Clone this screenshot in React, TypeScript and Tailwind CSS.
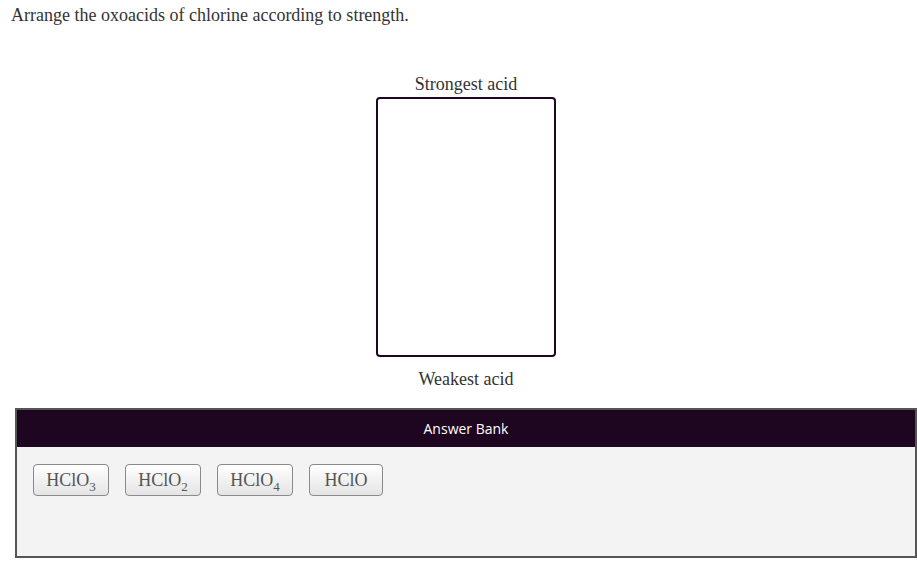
const serif = "font-['Liberation_Serif',_'Times_New_Roman',_serif]";

const answers: Array<{ base: string; sub?: string }> = [
  { base: "HClO", sub: "3" },
  { base: "HClO", sub: "2" },
  { base: "HClO", sub: "4" },
  { base: "HClO" }
];

function AnswerChip({ base, sub }: { base: string; sub?: string }) {
  return (
    <div
      className={`flex h-[32px] items-center justify-center rounded-[4px] border border-[#8a8a8a] bg-gradient-to-b from-white to-[#e4e4e4] text-[18px] leading-none text-[#555] ${serif} ${
        sub ? "w-[76px]" : "w-[74px]"
      }`}
    >
      <span>
        {base}
        {sub && <sub className="bottom-[-5px] text-[13px]">{sub}</sub>}
      </span>
    </div>
  );
}

export default function App() {
  return (
    <div className="min-h-[588px] bg-white">
      <p className={`pl-[11px] pt-[5px] text-[18px] leading-[20px] text-[#333] ${serif}`}>
        Arrange the oxoacids of chlorine according to strength.
      </p>

      <div className="ml-[15px] flex flex-col items-center pt-[49px]">
        <span className={`text-[18px] leading-[20px] text-[#333] ${serif}`}>Strongest acid</span>
        <div className="mt-[3px] h-[260px] w-[180px] rounded-[4px] border-2 border-[#1e0620] bg-white" />
        <span className={`mt-[12px] text-[18px] leading-[20px] text-[#333] ${serif}`}>Weakest acid</span>
      </div>

      <div className="ml-[15px] mt-[19px] border-2 border-[#555]">
        <div className="flex h-[37px] items-center justify-center bg-[#1e0620] font-['Open_Sans',_sans-serif] text-[14px] text-white">
          Answer Bank
        </div>
        <div className="flex h-[109px] items-start gap-[16px] bg-[#f3f3f3] pl-[16px] pt-[17px]">
          {answers.map((answer, i) => (
            <AnswerChip key={i} base={answer.base} sub={answer.sub} />
          ))}
        </div>
      </div>
    </div>
  );
}
